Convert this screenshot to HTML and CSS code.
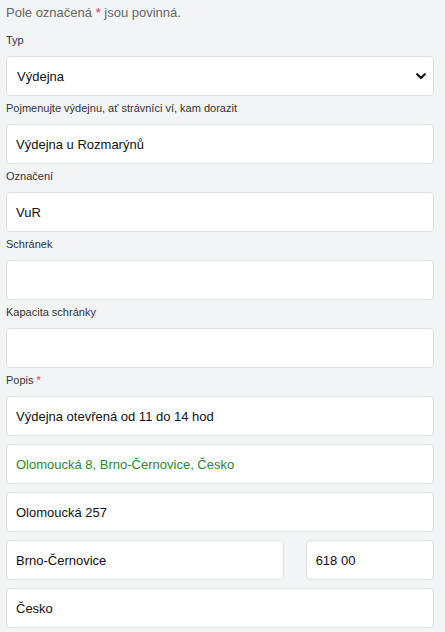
FILE: index.html
```html
<!DOCTYPE html>
<html lang="cs">
<head>
<meta charset="utf-8">
<link rel="stylesheet" href="styles.css">
</head>
<body>
<form class="form">
  <p class="note">Pole označená <span class="req">*</span> jsou povinná.</p>

  <label class="label" for="typ">Typ</label>
  <div class="select-wrap">
    <select id="typ" class="control select">
      <option>Výdejna</option>
    </select>
    <svg class="chevron" width="10" height="7" viewBox="0 0 10 7" aria-hidden="true"><path d="M1.2 1.2 5 5 8.8 1.2" fill="none" stroke="#111" stroke-width="2.2" stroke-linecap="round" stroke-linejoin="round"/></svg>
  </div>

  <label class="label" for="nazev">Pojmenujte výdejnu, ať strávníci ví, kam dorazit</label>
  <input id="nazev" class="control" type="text" value="Výdejna u Rozmarýnů">

  <label class="label" for="oznaceni">Označení</label>
  <input id="oznaceni" class="control" type="text" value="VuR">

  <label class="label" for="schranek">Schránek</label>
  <input id="schranek" class="control" type="text" value="">

  <label class="label" for="kapacita">Kapacita schránky</label>
  <input id="kapacita" class="control" type="text" value="">

  <label class="label" for="popis">Popis <span class="req">*</span></label>
  <div class="stack">
    <input id="popis" class="control" type="text" value="Výdejna otevřená od 11 do 14 hod">
    <input class="control control-green" type="text" value="Olomoucká 8, Brno-Černovice, Česko">
    <input class="control" type="text" value="Olomoucká 257">
    <div class="row">
      <input class="control" type="text" value="Brno-Černovice">
      <input class="control" type="text" value="618 00">
    </div>
    <input class="control" type="text" value="Česko">
  </div>
</form>
</body>
</html>
```
FILE: styles.css
```css
html, body {
  margin: 0;
  padding: 0;
  background: #f3f4f6;
}
body {
  font-family: "Liberation Sans", Arial, sans-serif;
  color: #222;
}
.form {
  display: flex;
  flex-direction: column;
  padding: 3px 11px 0 6px;
}
.note {
  margin: 0 0 9px;
  font-size: 13px;
  line-height: 20px;
  color: #666;
}
.req {
  color: #dc3545;
}
.label {
  display: block;
  font-size: 11px;
  line-height: 16px;
  color: #333;
  margin: 0 0 8px;
}
.control + .label,
.select-wrap + .label {
  margin-top: 4px;
}
.control {
  box-sizing: border-box;
  display: block;
  width: 100%;
  height: 40px;
  margin: 0;
  padding: 0 9px;
  border: 1px solid #dfe1e5;
  border-radius: 4px;
  background: #fff;
  font-family: "Liberation Sans", Arial, sans-serif;
  font-size: 13px;
  color: #111;
  outline: none;
}
.control-green {
  color: #2a8a2a;
}
.select-wrap {
  position: relative;
}
.select {
  appearance: none;
  -webkit-appearance: none;
  padding-left: 10px;
  padding-right: 30px;
}
.chevron {
  position: absolute;
  right: 8px;
  top: 17px;
  pointer-events: none;
}
.stack {
  display: flex;
  flex-direction: column;
  gap: 8px;
}
.row {
  display: grid;
  grid-template-columns: minmax(0, 279fr) minmax(0, 129fr);
  gap: 22px;
}
```
